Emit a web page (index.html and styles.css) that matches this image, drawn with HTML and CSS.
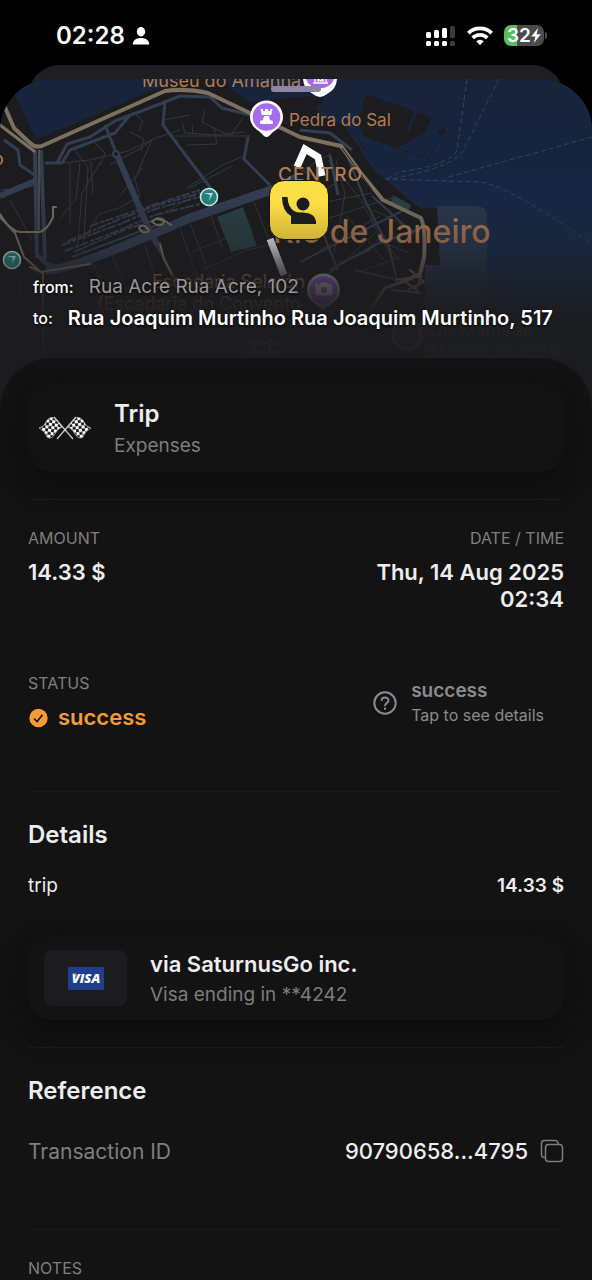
FILE: index.html
```html
<!DOCTYPE html>
<html lang="en">
<head>
<meta charset="utf-8">
<meta name="viewport" content="width=device-width, initial-scale=1">
<title>Trip</title>
<link rel="stylesheet" href="styles.css">
</head>
<body>
<header class="status-bar">
  <div class="status-time">
    <span>02:28</span>
    <svg width="18" height="18" viewBox="0 0 18 18" fill="#fff" aria-hidden="true"><ellipse cx="9" cy="4.7" rx="4.2" ry="4.7"/><path d="M.8 17.6C.6 13.5 4 11 9 11s8.400 2.500 8.200 6.600z"/></svg>
  </div>
  <div class="status-icons">
    <svg width="31" height="22" viewBox="0 0 31 22" aria-hidden="true"><g fill="#fff"><rect x="1" y="7" width="5" height="6" rx="1.500"/><rect x="9" y="5" width="5" height="8" rx="1.500"/><rect x="17" y="3" width="5" height="10" rx="1.500"/><rect x="1" y="16" width="5" height="5" rx="1.500"/><rect x="9" y="16" width="5" height="5" rx="1.500"/><rect x="17" y="16" width="5" height="5" rx="1.500"/></g><g fill="#3c3c3e"><rect x="25" y="1" width="5" height="12" rx="1.500"/><rect x="25" y="16" width="5" height="5" rx="1.500"/></g></svg>
    <svg width="26" height="20" viewBox="0 0 26 20" aria-hidden="true"><g fill="none" stroke="#fff" stroke-width="3.800"><path d="M1.300 7.100a16.800 16.800 0 0 1 23.400 0"/><path d="M5.700 11.900a10.400 10.400 0 0 1 14.600 0"/></g><path d="M9.300 15.300a5.300 5.300 0 0 1 7.400 0L13 19.200z" fill="#fff"/></svg>
    <div class="battery"><span>32</span><svg width="10" height="15" viewBox="0 0 9 14" fill="#fff" aria-hidden="true"><path d="M6.500 0 0 8h4L2.500 14 9 5.800H5z"/></svg></div>
  </div>
</header>

<div class="back-sheet"></div>
<main class="sheet">
  <section class="hero">
    <svg class="map" viewBox="0 79 592 280" preserveAspectRatio="xMidYMin slice" role="img" aria-label="Map of Rio de Janeiro">
      <defs>
        <linearGradient id="fade" x1="0" y1="0" x2="0" y2="1"><stop offset="0" stop-color="#1c1c1e" stop-opacity="0"/><stop offset=".35" stop-color="#1c1c1e" stop-opacity=".35"/><stop offset=".56" stop-color="#1c1c1e" stop-opacity=".78"/><stop offset=".7" stop-color="#1c1c1e" stop-opacity=".94"/><stop offset="1" stop-color="#1c1c1e" stop-opacity=".97"/></linearGradient>
        <linearGradient id="water" gradientUnits="userSpaceOnUse" x1="0" y1="79" x2="0" y2="300"><stop offset="0" stop-color="#18243c"/><stop offset=".4" stop-color="#18253f"/><stop offset="1" stop-color="#1a3158"/></linearGradient>
        <linearGradient id="walk" gradientUnits="userSpaceOnUse" x1="0" y1="235" x2="0" y2="300"><stop offset="0" stop-color="#fff"/><stop offset="1" stop-color="#fff" stop-opacity=".3"/></linearGradient>
      </defs>
      <rect y="79" width="592" height="290" fill="#1c1c1f"/>
      <path fill="url(#water)" d="M10 79H182L150 91 42 137Q36 140 32 130L14 93zM225 79H592V369H440V208H420L398 190 374 170 345 126 322 117 316 108 326 98 308 96 285 98 250 102 232 90z"/>
      <path fill="#1c1c1f" d="M366 94 432 117 425 133 410 141 396 148 363 136 358 120zM437 132l6-4 4 3-6 5z"/>
      <path d="M396 148l33 11 12-27M342 117l38 54" stroke="#1a1d26" stroke-width="1" fill="none"/>
      <path d="M416 111l-8 20" stroke="#18243c" stroke-width="3"/>
      <path fill="#2a3750" d="M437 206H476Q487 206 487 217V369H425V265H440z"/>
      <path fill="#284246" d="M217 217 243 207 257 246 231 252zM393 195l18 10-2 5-18-8z"/>
      <g fill="none" stroke="#33373f" stroke-width="1">
        <path d="M62 163 90 160 128 151 156 138 180 130M75 150l13 18-5 85M95 143l10 10-5 12M130 132l14 7-3 12M110 165l31-17 11-8-9 20-8 20 5 16-21 12-20 6-15 25M70 163v60M80 163l-4 36-16 20M91 162l2 32M100 163l-18 30-5 60M142 168l-22 28M133 112l10 9-4 10M205 110l-3 12 12 6 3 16-30 1M164 120l26-5M182 122l3 11 31 2 29-3M192 125l1 9M214 128l16 8 14-20M187 188l35-23 24-10M190 188l42-22M165 212l30-16M172 136h78M0 190l38-4M10 200l22 40M60 270l18 50M90 258l22 42M110 250l20 48M145 245l14 44M180 228l20 56M190 223l22 58M202 270l45-20 22-5M192 252l40-16M210 213l12 34M254 202l15 38M296 175l35-22M291 165l28 14M328 160l45 54M340 180l-38 26M310 205l62-12M310 224l85-27M320 250l60-34M328 276l48-44M336 160l9 34-11 60M360 201l38 59M347 216l38 45M370 218l22 40M374 210l42 22M376 240l33 13M364 270l37-13M0 300l60-10 50 20 70-14M20 282v76M60 350l40-38 90 6M280 315l50-12 30 25"/>
      </g>
      <g fill="none" stroke="#333e52" stroke-linejoin="round">
        <path stroke-width="3" d="M4 140 18 150 20 165 36 176M45 163H57L67 144 90 137 115 121 165 102 180 96 210 97 222 108 250 115M55 163 62 163 70 150 115 133 130 115M165 100 163 125 212 190M105 125 117 155 147 225 157 245 175 280M248 137l-4 22 26 26M296 175 240 203M300 130l30 3 22 17M330 155l8 40"/>
        <path stroke-width="2" d="M345 150l20 50 25 50 8 35M300 262l110-55M315 212l23 59M330 270l47-26 40-14M372 196l42 38M315 285l26-22 30-14M355 270l43 10"/>
        <path stroke-width="6" d="M0 196 35 181M117 155 147 225 158 246"/>
        <path stroke-width="4" d="M35 150 37 258M41 150l4 110M38 255Q50 275 80 262L150 232"/>
        <path stroke-width="9" d="M46 270Q65 273 190 218L295 182"/>
        <path stroke-width="2" stroke-dasharray="9 2 4 1" d="M62 245 120 224 155 209 200 197M65 251l50-19 40-17 45-11M68 241l52-22 35-13 46-13M74 252l50-22 30-10M90 226l60-20 50-16"/>
        <path stroke-width="2" d="M72 257l93-35M232 243l11-4 7-4"/>
      </g>
      <circle cx="116" cy="154" r="3" fill="#1c1c1f" stroke="#333e52" stroke-width="2"/>
      <g fill="none" stroke="#7c7160" stroke-linejoin="round" stroke-linecap="round">
        <path stroke-width="4" d="M4 105 14 128 30 143Q36 149 44 145L165 91Q185 88 208 93L252 114 300 137 341 146 360 172 383 200 421 218Q426 230 424 258L420 274 402 282"/>
        <path stroke-width="3" d="M0 125 34 151M402 282 385 288 370 310"/>
        <path stroke-width="1" d="M39 150V230"/>
        <path stroke-width="2" d="M0 214Q10 231 20 232H40Q48 229 53 217V207H56M0 217 15 233 24 257 41 272 90 264M30 267l13 6v80M139 228q3-5 8 0t-5 4zM152 222q5-6 12-2 1 6-7 5zM157 219l8 2 6 4M160 244l4 15 8 16M396 280l25-4-5 13-12-8 16 12-28-3M410 270l14 12-16 8"/>
      </g>
      <path d="M342 148l30 42" fill="none" stroke="#1c1c1f" stroke-width="1"/>
      <g fill="none" stroke="#3b4558" stroke-dasharray="5 3"><path d="M467 79 457 150Q450 165 400 172L385 180M499 79l-34 68q-7 20-75 32M592 137 445 178M385 179l95 3q30 4 112 62"/></g>
      <g fill="#b07c54" font-family="Inter, sans-serif">
        <path d="M297 167 305 149 318 157 322 176" fill="none" stroke="#fff" stroke-width="7"/>
        <path d="M270 239 284 275" fill="none" stroke="url(#walk)" stroke-width="7"/>
        <text x="142" y="87" font-size="18">Museu do Amanhã</text>
        <text x="289" y="126" font-size="17">Pedra do Sal</text>
        <text x="-7" y="165" font-size="18">o</text>
        <text x="278" y="181" font-size="19" letter-spacing="1" font-weight="500">CENTRO</text>
        <text x="273" y="243" font-size="32" font-weight="500">Rio de Janeiro</text>
        <text x="152" y="288" font-size="18">Escadaria Selarón</text>
        <text x="97" y="310" font-size="18">(Escadaria do Convento</text>
        <text x="430" y="336" font-size="18">Dr. Mamede</text>
        <text x="430" y="357" font-size="17">Marina da Glória</text>
      </g>
      <g>
        <path d="M303 79a18 18 0 0 0 10 15q7 6 14 0a18 18 0 0 0 10-15z" fill="#fff"/><path d="M306 79a14.500 12.500 0 0 0 28 0z" fill="#a268e8"/><path d="M313 83h15M315 82v-3M326 82v-3M318 82v-3l2.500 2 2.500-2v3" stroke="#fff" stroke-width="1.300" fill="none"/>
        <path d="M250 117a16.500 16.500 0 1 1 33 0c0 7-5 12-10 15l-4 4q-2.500 2-5 0l-4-4c-5-3-10-8-10-15z" fill="#fff"/><circle cx="266.500" cy="117" r="13.800" fill="#a66cf0"/><path d="M260.500 109h2.500v2h2v-2h3v2h2v-2h2.500l-1.200 6h-9.600zM264 116h5l1 4 3 1v3h-13v-3l3-1z" fill="#fff"/>
        <path d="M307 290a16.500 16.500 0 1 1 33 0c0 7-5 12-10 15l-7 5-6-5c-5-3-10-8-10-15z" fill="#ccc"/><circle cx="323.500" cy="290" r="13.800" fill="#b465fb"/><path d="M319 285l2-2h6l2 2h3v10h-16v-8h3zM314 285h5M316.500 282.500v5" fill="#eee" stroke="#eee"/><circle cx="324" cy="290" r="3" fill="#a35ed8"/>
        <circle cx="407" cy="335" r="16" fill="#999"/><circle cx="407" cy="335" r="12" fill="#444"/><path d="M245 345l9-5 8 5 8-5 9 5M246 352h32M254 339v16M270 339v16" stroke="#999" stroke-width="2" fill="none"/>
      </g>
      <g><circle cx="209" cy="197" r="8.500" fill="#238580" stroke="#d4eeeb" stroke-width="1.600"/><path d="M204 193h9l-4 8 1-6z" fill="#bde4e1"/><circle cx="12" cy="260" r="8.500" fill="#278b86" stroke="#d4eeeb" stroke-width="1.600"/><path d="M7 256h9l-4 8 1-6z" fill="#bde4e1"/></g>
      <rect y="190" width="592" height="170" fill="url(#fade)"/>
    </svg>
    <div class="grabber"></div>
    <div class="pin"><svg width="36" height="32" viewBox="0 0 36 32" fill="#1c1c1e" aria-hidden="true"><circle cx="22" cy="10" r="6.500"/><path d="M1 3H6.500Q7 13 13 17Q16 19 22 18.500Q34 19 35 27V30H10V22Q1 17 1 3z"/></svg></div>
    <dl class="route">
      <div class="route-row"><dt>from:</dt><dd class="route-from">Rua Acre Rua Acre, 102</dd></div>
      <div class="route-row route-row-to"><dt>to:</dt><dd class="route-to">Rua Joaquim Murtinho Rua Joaquim Murtinho, 517</dd></div>
    </dl>
  </section>

  <div class="panel">
    <section class="card trip-card">
      <svg class="flags" width="54" height="26" viewBox="0 0 54 26" aria-hidden="true">
        <defs>
          <pattern id="check" width="6" height="6" patternUnits="userSpaceOnUse" patternTransform="rotate(8)"><rect width="6" height="6" fill="#151515"/><rect width="3.200" height="3.200" fill="#fff"/><rect x="3" y="3" width="3.200" height="3.200" fill="#fff"/></pattern>
          <g id="flag"><path d="M1 13Q6 12 8 7Q11 1 17 3L24 12Q19 14 17 19Q13 25 9 22Q7 16 1 13z" fill="url(#check)" stroke="#ddd" stroke-width=".6"/><path d="M16 2 35 24" stroke="#ccc" stroke-width="1.200"/></g>
        </defs>
        <use href="#flag"/><use href="#flag" transform="translate(54 0) scale(-1 1)"/>
      </svg>
      <div class="card-text"><h1 class="title">Trip</h1><p class="subtitle">Expenses</p></div>
    </section>
    <hr class="rule">
    <section class="pair summary">
      <div><h2 class="label">AMOUNT</h2><p class="value">14.33 $</p></div>
      <div class="align-end"><h2 class="label">DATE / TIME</h2><p class="value">Thu, 14 Aug 2025<br>02:34</p></div>
    </section>
    <section class="pair status">
      <div><h2 class="label">STATUS</h2>
        <p class="value state"><svg width="20" height="20" viewBox="0 0 20 20" aria-hidden="true"><circle cx="10.500" cy="10" r="9.200" fill="#f79a38"/><path d="M6 10.500 9.100 13.500 14.500 6.800" fill="none" stroke="#17130f" stroke-width="1.600"/></svg>success</p></div>
      <button class="help" type="button">
        <svg width="24" height="24" viewBox="0 0 24 24" fill="none" stroke="#8b8b8f" stroke-width="2" aria-hidden="true"><circle cx="12" cy="12" r="10.700"/><path d="M8.500 9.800C8.500 5.500 15.500 5.500 15.500 9.600C15.500 12 12 12 12 15"/><path d="M12 16.600v2.200"/></svg>
        <span class="help-text"><span class="help-title">success</span><span class="help-note">Tap to see details</span></span>
      </button>
    </section>
    <hr class="rule">
    <section class="details">
      <h2 class="heading">Details</h2>
      <div class="line"><span>trip</span><strong>14.33 $</strong></div>
    </section>
    <section class="card pay-card">
      <div class="visa-tile"><svg width="38" height="24" viewBox="0 0 38 24" role="img" aria-label="Visa"><rect x="1" y="1" width="36" height="23" rx="1.500" fill="#203f8b"/><text x="19" y="17" text-anchor="middle" font-family="Open Sans, sans-serif" font-weight="800" font-style="italic" font-size="13" fill="#fff">VISA</text><path d="M5 7.500h4l1.500 4Q8 8.500 5 7.500z" fill="#e7a55b"/></svg></div>
      <div class="card-text"><h2 class="pay-title">via SaturnusGo inc.</h2><p class="subtitle">Visa ending in **4242</p></div>
    </section>
    <hr class="rule">
    <section class="reference">
      <h2 class="heading">Reference</h2>
      <div class="transaction"><span class="muted">Transaction ID</span><span class="tx-id">90790658...4795</span>
        <button class="copy" type="button" aria-label="Copy transaction ID"><svg width="24" height="24" viewBox="0 0 24 24" fill="none" stroke="#7d7d7d" stroke-width="1.500" aria-hidden="true"><rect x="5.500" y="5.500" width="17" height="17" rx="3"/><path d="M5.500 18.500H4.500Q1.500 18.500 1.500 15.500V4.500Q1.500 1.500 4.500 1.500H15Q18 1.500 18.500 5.500"/></svg></button></div>
    </section>
    <hr class="rule">
    <h2 class="label">NOTES</h2>
  </div>
</main>
</body>
</html>
```
FILE: styles.css
```css
* { box-sizing: border-box; }
body, h1, h2, p, dl, dd { margin: 0; }
body {
  min-height: 100vh;
  display: flex;
  flex-direction: column;
  background: #000;
  color: #ededed;
  font-family: Inter, "Noto Sans", sans-serif;
}
h1, h2 { font-weight: 600; }
button { font: inherit; color: inherit; background: none; border: 0; padding: 0; cursor: pointer; }
svg { display: block; flex: none; }

.status-bar {
  display: flex;
  justify-content: space-between;
  align-items: center;
  height: 65px;
  padding: 6px 45px 0 56px;
  color: #fff;
}
.status-time { display: flex; align-items: center; gap: 7px; font-size: 24px; font-weight: 600; }
.status-icons { display: flex; align-items: center; gap: 11px; }
.battery {
  position: relative;
  display: flex;
  align-items: center;
  justify-content: center;
  width: 40px;
  height: 21px;
  margin-right: 3px;
  border-radius: 7px;
  background: linear-gradient(90deg, #5cbd5f 32%, #4b4b4d 32%);
  font-size: 19px;
  font-weight: 600;
}
.battery::after {
  content: "";
  position: absolute;
  right: -3px;
  width: 2px;
  height: 7px;
  border-radius: 0 2px 2px 0;
  background: #4b4b4d;
}

.back-sheet { height: 40px; margin: 0 28px -26px; border-radius: 32px 32px 0 0; background: #1f1f21; }
.sheet {
  position: relative;
  flex: 1;
  display: flex;
  flex-direction: column;
  overflow: hidden;
  border-radius: 52px 52px 0 0;
  background: #1c1c1e;
}
.hero { position: relative; padding: 189px 24px 24px 33px; }
.map { position: absolute; inset: 0; width: 100%; height: 100%; }
.grabber {
  position: absolute;
  top: 7px;
  left: 50%;
  width: 50px;
  height: 6px;
  margin-left: -25px;
  border-radius: 3px;
  background: #8e86a6;
}
.pin {
  position: absolute;
  top: 101px;
  left: 50%;
  display: flex;
  align-items: center;
  justify-content: center;
  width: 60px;
  height: 60px;
  margin-left: -27px;
  border: 1px solid #17140a;
  border-radius: 15px;
  background: linear-gradient(#fbdd45 40%, #cfb238);
}
.route { position: relative; color: #fff; text-shadow: 0 1px 3px #000; }
.route-row { display: flex; align-items: center; gap: 15px; height: 37px; }
.route-row-to { height: 32px; margin-top: -3px; }
.route-row dt { font-size: 16px; font-weight: 500; }
.route-from { font-size: 19px; color: #98979c; }
.route-to { font-size: 20px; font-weight: 600; white-space: nowrap; }

.panel { flex: 1; padding: 26px 28px 0; border-radius: 52px 52px 0 0; background: #131313; }
.card { display: flex; align-items: center; border-radius: 24px; background: #131313; box-shadow: 0 12px 24px #0d0d0d; }
.card-text { padding-top: 3px; }
.trip-card { min-height: 88px; padding: 0 10px; gap: 22px; }
.title { font-size: 24px; line-height: 32px; }
.subtitle { font-size: 19px; line-height: 32px; color: #7d7d7d; }
.rule { height: 1px; margin: 27px 0 26px; border: 0; background: #1b1b1b; }
.pair { display: flex; justify-content: space-between; }
.summary { min-height: 145px; }
.status { min-height: 93px; }
.align-end { text-align: right; }
.label { font-size: 16px; line-height: 24px; font-weight: 400; color: #7f7f7f; }
.value { margin-top: 9px; font-size: 22px; line-height: 27px; font-weight: 600; }
.state { display: flex; align-items: center; gap: 10px; color: #f79a38; }
.help { display: flex; align-items: center; align-self: flex-start; gap: 14px; padding: 7px 20px 0 0; color: #8b8b8f; text-align: left; }
.help-text { display: flex; flex-direction: column; line-height: 25px; }
.help-title { font-size: 19px; font-weight: 600; }
.help-note { font-size: 16px; }
.heading { font-size: 24px; line-height: 34px; }
.line { display: flex; justify-content: space-between; margin-top: 21px; font-size: 19px; line-height: 26px; }
.line strong { font-weight: 600; }
.pay-card { min-height: 84px; margin-top: 37px; padding: 0 16px; gap: 23px; }
.pay-title { font-size: 22px; line-height: 30px; }
.visa-tile { display: flex; align-items: center; justify-content: center; width: 83px; height: 56px; border-radius: 8px; background: #1c1c1e; }
.transaction { display: flex; align-items: center; min-height: 28px; margin-top: 29px; margin-bottom: 64px; font-size: 22px; }
.muted { margin-right: auto; font-size: 21px; color: #7f7f7f; }
.tx-id { font-weight: 500; }
.copy { margin-left: 12px; }
```
